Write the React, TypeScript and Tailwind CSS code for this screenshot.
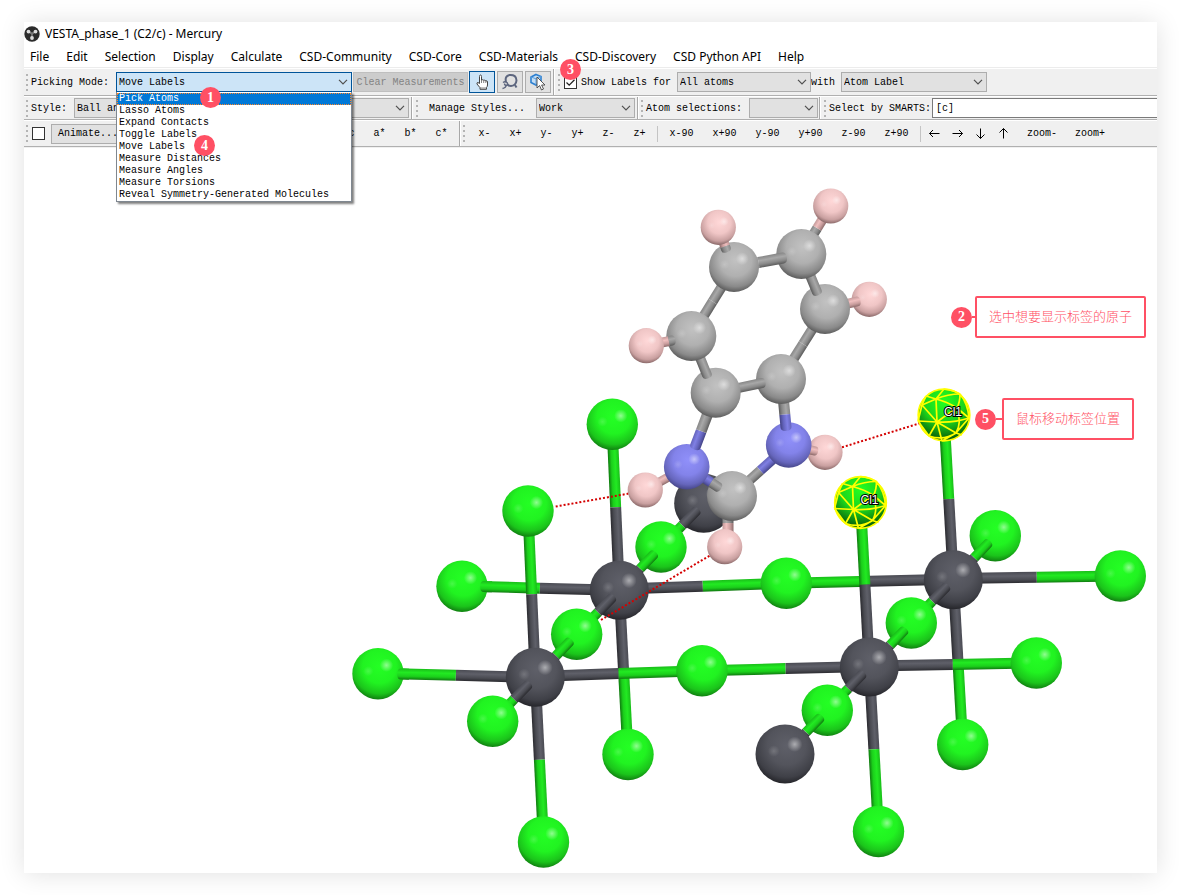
import React from "react";

type Kind = "cl" | "m" | "c" | "n" | "h";

const menus = [
  "File", "Edit", "Selection", "Display", "Calculate", "CSD-Community",
  "CSD-Core", "CSD-Materials", "CSD-Discovery", "CSD Python API", "Help",
];

const modes = [
  "Pick Atoms", "Lasso Atoms", "Expand Contacts", "Toggle Labels", "Move Labels",
  "Measure Distances", "Measure Angles", "Measure Torsions",
  "Reveal Symmetry-Generated Molecules",
];

const radius: Record<Kind, number> = { cl: 25.7, m: 29.5, c: 25, n: 22.8, h: 17.6 };

const ballStops: Record<Kind, string[]> = {
  cl: ["#24ff24", "#21f321", "#1bc41b", "#0d6a0d"],
  m: ["#5f6069", "#53545c", "#3f4047", "#1d1d21"],
  c: ["#c2c2c2", "#b0b0b0", "#8a8a8a", "#4c4c4c"],
  n: ["#9090fa", "#8383ea", "#6666bc", "#3c3c78"],
  h: ["#ffd8d8", "#f0c6c6", "#c9a0a0", "#755656"],
};

const rodStops: Record<Kind, string[]> = {
  cl: ["#19bd19", "#22ea22", "#1bcf1b", "#107a10"],
  m: ["#4a4b53", "#5f6069", "#4a4b52", "#2b2b30"],
  c: ["#868686", "#a8a8a8", "#8a8a8a", "#5c5c5c"],
  n: ["#6464bb", "#8080e4", "#6464bd", "#444486"],
  h: ["#c39999", "#f0bfbf", "#c99d9d", "#8d6b6b"],
};

const kinds: Kind[] = ["cl", "m", "c", "n", "h"];

function Ball({ k, x, y }: { k: Kind; x: number; y: number }) {
  const r = radius[k];
  return (
    <g>
      <circle cx={x} cy={y} r={r} fill={`url(#ball-${k})`} />
      <circle cx={x + r * 0.33} cy={y - r * 0.33} r={r * 0.26} fill="url(#shine)" />
      <circle cx={x - r * 0.38} cy={y - r * 0.1} r={r * 0.2} fill="url(#shine)" opacity="0.35" />
    </g>
  );
}

interface RodProps {
  from: [number, number];
  to: [number, number];
  a: Kind;
  b?: Kind;
  split?: number;
  w?: number;
  cap?: "from" | "to";
}

function Rod({ from, to, a, b = a, split = 0.5, w = 11, cap }: RodProps) {
  let [p, q, ka, kb, s, c] = [from, to, a, b, split, cap];
  if (to[0] < from[0]) {
    [p, q, ka, kb, s] = [to, from, b, a, 1 - split];
    c = cap === "from" ? "to" : cap === "to" ? "from" : undefined;
  }
  const dx = q[0] - p[0];
  const dy = q[1] - p[1];
  const len = Math.hypot(dx, dy);
  const m = len * s;
  const deg = (Math.atan2(dy, dx) * 180) / Math.PI;
  const h = w / 2;
  const start = c === "from" ? `M${m} ${-h}H0Q${-h * 0.7} ${-h} ${-h * 0.7} 0Q${-h * 0.7} ${h} 0 ${h}H${m}Z` : `M0 ${-h}H${m}V${h}H0Z`;
  const end = c === "to" ? `M${m} ${-h}H${len}Q${len + h * 0.7} ${-h} ${len + h * 0.7} 0Q${len + h * 0.7} ${h} ${len} ${h}H${m}Z` : `M${m} ${-h}H${len}V${h}H${m}Z`;
  return (
    <g transform={`translate(${p[0]} ${p[1]}) rotate(${deg})`}>
      <path d={start} fill={`url(#rod-${ka})`} />
      <path d={end} fill={`url(#rod-${kb})`} />
    </g>
  );
}

/* A bond whose far end pokes out of the atom behind it. */
function Deep({ far, near, a, b }: { far: [number, number]; near: [number, number]; a: Kind; b: Kind }) {
  const s: [number, number] = [far[0] + (near[0] - far[0]) * 0.18, far[1] + (near[1] - far[1]) * 0.18];
  return <Rod from={s} to={near} a={a} b={b} split={0.39} cap="from" w={10} />;
}

function Picked({ x, y }: { x: number; y: number }) {
  return (
    <g transform={`translate(${x} ${y})`}>
      <circle r="26" fill="url(#ball-picked)" />
      <g fill="none" stroke="#ffff00" strokeWidth="1.7">
        <circle r="25.800" />
        <path d="M-8-16-18-19M-8-16 0-26M-8-16Q4-21 16-21M-8-16-22-10M-8-16-7 7M-8-16Q4-13 13-7" />
        <path d="M-7 7-22-10M-7 7-26 6M-7 7-15 21M-7 7-2 26M-7 7 12 18M-7 7Q2 0 13-7M-7 7Q10 8 25 3" />
        <path d="M16-21Q16-13 13-7M16-21Q24-11 25 3M13-7 25 3M13-7Q18 8 12 18M12 18 25 3M12 18-2 26M12 18 18 20M-15 21Q0 26 12 18M-22-10-26 6M-26 6-15 21M-18-19Q-20-15-22-10M0-26Q9-25 16-21" />
      </g>
      <text x="0" y="1" fontSize="12" fontFamily="Liberation Sans, sans-serif" fill="#fff" stroke="#000" strokeWidth="2" paintOrder="stroke">Cl1</text>
    </g>
  );
}

function Scene() {
  return (
    <svg viewBox="24 149 1133 724" className="block w-full" role="img" aria-label="Crystal structure">
      <defs>
        {kinds.map((k) => (
          <React.Fragment key={k}>
            <radialGradient id={`ball-${k}`} cx="0.53" cy="0.36" r="0.68">
              <stop offset="0" stopColor={ballStops[k][0]} />
              <stop offset="0.48" stopColor={ballStops[k][1]} />
              <stop offset="0.78" stopColor={ballStops[k][2]} />
              <stop offset="1" stopColor={ballStops[k][3]} />
            </radialGradient>
            <linearGradient id={`rod-${k}`} x1="0" y1="0" x2="0" y2="1">
              <stop offset="0" stopColor={rodStops[k][0]} />
              <stop offset="0.35" stopColor={rodStops[k][1]} />
              <stop offset="0.7" stopColor={rodStops[k][2]} />
              <stop offset="1" stopColor={rodStops[k][3]} />
            </linearGradient>
          </React.Fragment>
        ))}
        <radialGradient id="ball-picked" cx="0.5" cy="0.25" r="0.78">
          <stop offset="0" stopColor="#22ff22" />
          <stop offset="0.5" stopColor="#1cd41c" />
          <stop offset="1" stopColor="#064a06" />
        </radialGradient>
        <radialGradient id="shine">
          <stop offset="0" stopColor="#fff" stopOpacity="0.5" />
          <stop offset="1" stopColor="#fff" stopOpacity="0" />
        </radialGradient>
      </defs>

      <Ball k="m" x={703.7} y={503.3} />
      <Deep far={[703.7, 503.3]} near={[661, 547]} a="m" b="cl" />
      <Ball k="cl" x={661} y={547} />
      <Deep far={[661, 547]} near={[619.3, 590.3]} a="cl" b="m" />
      <Ball k="cl" x={995.3} y={535.7} />
      <Deep far={[995.3, 535.7]} near={[953.3, 579.7]} a="cl" b="m" />

      <Rod from={[612, 424]} to={[619.3, 590.3]} a="cl" b="m" />
      <Rod from={[619.3, 590.3]} to={[628, 754.5]} a="m" b="cl" split={0.48} />
      <Rod from={[944, 415]} to={[953.3, 579.7]} a="cl" b="m" split={0.51} />
      <Rod from={[953.3, 579.7]} to={[962.7, 744.5]} a="m" b="cl" />
      <Rod from={[480, 586.5]} to={[619.3, 590.3]} a="cl" b="m" split={0.43} />
      <Rod from={[619.3, 589]} to={[786.3, 583.3]} a="m" b="cl" />
      <Rod from={[786.3, 583.3]} to={[953.3, 579.2]} a="cl" b="m" />
      <Rod from={[953.3, 578.6]} to={[1120.3, 576]} a="m" b="cl" />
      <Ball k="cl" x={612.3} y={424.3} />
      <Ball k="cl" x={628} y={754.5} />
      <Ball k="cl" x={962.7} y={744.5} />
      <Ball k="cl" x={462} y={586.3} />
      <Rod from={[484, 586.6]} to={[492, 586.8]} a="cl" cap="from" />
      <Ball k="cl" x={786.3} y={583.3} />
      <Ball k="cl" x={1120.3} y={576} />
      <Ball k="m" x={619.3} y={590.3} />
      <Ball k="m" x={953.3} y={579.7} />
      <Deep far={[619.3, 590.3]} near={[576.7, 634.3]} a="m" b="cl" />
      <Deep far={[953.3, 579.7]} near={[911.3, 623]} a="m" b="cl" />
      <Ball k="cl" x={576.7} y={634.3} />
      <Ball k="cl" x={911.3} y={623} />
      <Deep far={[576.7, 634.3]} near={[535.3, 677.3]} a="cl" b="m" />
      <Deep far={[911.3, 623]} near={[869.3, 667]} a="cl" b="m" />

      <Rod from={[528, 511]} to={[535.3, 677.3]} a="cl" b="m" />
      <Rod from={[535.3, 677.3]} to={[543.5, 842]} a="m" b="cl" />
      <Rod from={[860.5, 502]} to={[869.3, 667]} a="cl" b="m" />
      <Rod from={[869.3, 667]} to={[878.5, 831.5]} a="m" b="cl" />
      <Rod from={[396, 673.7]} to={[535.3, 677.3]} a="cl" b="m" split={0.43} />
      <Rod from={[535.3, 676.5]} to={[702, 670.7]} a="m" b="cl" />
      <Rod from={[702, 670.7]} to={[869.3, 666.5]} a="cl" b="m" />
      <Rod from={[869.3, 666]} to={[1036.3, 663]} a="m" b="cl" />
      <Ball k="cl" x={528} y={511} />
      <Ball k="cl" x={543.5} y={842} />
      <Ball k="cl" x={878.5} y={831.5} />
      <Ball k="cl" x={378} y={673.7} />
      <Rod from={[401, 674]} to={[409, 674.2]} a="cl" cap="from" />
      <Ball k="cl" x={702} y={670.7} />
      <Ball k="cl" x={1036.3} y={663} />
      <Ball k="m" x={535.3} y={677.3} />
      <Ball k="m" x={869.3} y={667} />
      <Deep far={[535.3, 677.3]} near={[492.7, 721.3]} a="m" b="cl" />
      <Deep far={[869.3, 667]} near={[827.3, 710.3]} a="m" b="cl" />
      <Ball k="cl" x={492.7} y={721.3} />
      <Ball k="cl" x={827.3} y={710.3} />
      <Deep far={[827.3, 710.3]} near={[785, 754]} a="cl" b="m" />
      <Ball k="m" x={785} y={754} />

      <Picked x={944} y={415} />
      <Picked x={860.5} y={502.5} />

      <g stroke="#d40000" strokeWidth="2" strokeDasharray="2 2">
        <path d="M555.7 506.5 632 493M601 620 710 555.500M842 447.300 919 423.500" />
      </g>

      <Ball k="h" x={825} y={452.3} />
      <Rod from={[788.7, 445]} to={[815, 451]} a="h" w={9} cap="to" />
      <Ball k="h" x={869.3} y={299.3} />
      <Rod from={[825, 309]} to={[857, 301.5]} a="h" w={10} cap="to" />
      <Rod from={[825, 309]} to={[781, 379]} a="c" w={10} />
      <Ball k="c" x={825} y={309} />
      <Rod from={[788.7, 445]} to={[732, 496]} a="n" b="c" w={10} />
      <Ball k="n" x={788.7} y={445} />
      <Rod from={[782.5, 390]} to={[786, 427]} a="c" b="n" split={0.66} w={11} cap="to" />
      <Ball k="c" x={781} y={379} />
      <Rod from={[715.7, 392.7]} to={[762, 383]} a="c" w={10} cap="to" />
      <Rod from={[801.3, 254]} to={[817, 292]} a="c" w={10} cap="to" />
      <Rod from={[801.3, 254]} to={[830.7, 206]} a="c" b="h" split={0.54} w={10} />
      <Ball k="c" x={801.3} y={254} />
      <Ball k="h" x={830.7} y={206} />
      <Rod from={[734, 267]} to={[783, 258]} a="c" w={11} cap="to" />
      <Rod from={[734, 267]} to={[691.3, 336]} a="c" w={10} />
      <Ball k="c" x={734} y={267} />
      <Rod from={[718.3, 227.3]} to={[726, 249]} a="h" b="c" split={0.88} w={10} cap="to" />
      <Ball k="h" x={718.3} y={227.3} />
      <Rod from={[728, 546]} to={[728, 505]} a="h" b="c" split={0.56} w={11} />
      <Ball k="c" x={732} y={496} />
      <Rod from={[686.7, 466.7]} to={[718, 487]} a="n" b="c" split={0.78} w={10} cap="to" />
      <Rod from={[645.3, 490]} to={[686.7, 466.7]} a="h" b="n" split={0.57} w={9} />
      <Ball k="h" x={645.3} y={490} />
      <Ball k="n" x={686.7} y={466.7} />
      <Rod from={[715.7, 392.7]} to={[695.5, 446]} a="c" b="n" split={0.72} w={11} cap="to" />
      <Ball k="c" x={715.7} y={392.7} />
      <Rod from={[691.3, 336]} to={[707, 375]} a="c" w={10} cap="to" />
      <Ball k="c" x={691.3} y={336} />
      <Rod from={[646.3, 345.7]} to={[672, 340.5]} a="h" b="c" split={0.88} w={10} cap="to" />
      <Ball k="h" x={646.3} y={345.7} />
      <Ball k="h" x={724.7} y={546.7} />
    </svg>
  );
}

function Grip() {
  return (
    <span aria-hidden="true" className="flex shrink-0 flex-col gap-[3px]">
      <i className="size-[2px] bg-[#b4b4b4]" />
      <i className="size-[2px] bg-[#b4b4b4]" />
      <i className="size-[2px] bg-[#b4b4b4]" />
      <i className="size-[2px] bg-[#b4b4b4]" />
    </span>
  );
}

function Split() {
  return <span aria-hidden="true" className="h-full w-[2px] shrink-0 border-l border-[#a8a8a8] bg-white" />;
}

function Drop({ id, value, width, open, label }: { id: string; value: string; width: string; open?: boolean; label?: string }) {
  return (
    <span className={`relative flex h-5 shrink-0 items-center ${width}`}>
      <select
        id={id}
        aria-label={label}
        className={`h-5 w-full appearance-none border pl-[2px] pr-4 pt-px leading-4 outline-none ${open ? "border-[#005499] bg-[#cce4f7]" : "border-[#adadad] bg-[#e1e1e1]"}`}
      >
        <option>{value}</option>
      </select>
      <svg viewBox="0 0 10 6" className="pointer-events-none absolute right-1 h-[6px] w-[10px]" fill="none" stroke="#505050" strokeWidth="1.2">
        <path d="M1 .8 5 4.800 9 .8" />
      </svg>
    </span>
  );
}

function Badge({ n }: { n: number }) {
  return (
    <span className="flex size-[21px] shrink-0 items-center justify-center rounded-full bg-[#ff5064] font-['Liberation_Serif',serif] text-[14px] font-bold leading-none text-white">
      {n}
    </span>
  );
}

function Callout({ n, text, gap }: { n: number; text: string; gap: string }) {
  return (
    <div className="flex items-center">
      <Badge n={n} />
      <span className={`h-[2px] bg-[#ff5064] ${gap}`} />
      <p className="rounded-[2px] border-2 border-[#ff5064] px-3 pb-[10px] pt-2 font-['Noto_Sans_CJK_SC',sans-serif] text-[13px] font-light leading-5 text-[#ff5064]">
        {text}
      </p>
    </div>
  );
}

function Tick({ id, checked, label }: { id: string; checked?: boolean; label?: string }) {
  return (
    <span className="relative flex size-[13px] shrink-0">
      <input id={id} type="checkbox" defaultChecked={checked} aria-label={label} className="peer size-[13px] appearance-none border border-[#333] bg-white" />
      <svg viewBox="0 0 13 13" className="pointer-events-none absolute inset-0 hidden peer-checked:block" fill="none" stroke="#222" strokeWidth="1.3">
        <path d="M2.500 6.500 5.200 9.200 10.500 3.800" />
      </svg>
    </span>
  );
}

function Steps({ items, width }: { items: string[]; width: string }) {
  return (
    <>
      {items.map((t) => (
        <button key={t} type="button" className={`h-5 shrink-0 text-center ${width}`}>{t}</button>
      ))}
    </>
  );
}

const arrows = [
  { name: "Left", d: "M11.500 6.500H1.500M5 3 1.500 6.500 5 10" },
  { name: "Right", d: "M1.500 6.500H11.500M8 3 11.500 6.500 8 10" },
  { name: "Down", d: "M6.500 1.500V11.500M2.500 7.500 6.500 11.500 10.500 7.500" },
  { name: "Up", d: "M6.500 11.500V1.500M2.500 5.500 6.500 1.500 10.500 5.500" },
];

export default function App() {
  return (
    <div className="min-h-screen bg-white pb-[22px] pl-6 pr-[22px] pt-[22px]">
      <main className="bg-white text-black shadow-[0_1px_24px_rgba(0,0,0,0.12)]">
        <header className="font-['Noto_Sans',sans-serif] text-[12px]">
          <h1 className="flex h-6 items-center gap-[5px] font-normal">
            <svg viewBox="0 0 16 16" className="size-4" aria-hidden="true">
              <circle cx="8" cy="8" r="7.700" fill="#2b2b2b" />
              <path d="M4.500 6 8 7.500 11.500 6M8 7.500V12" stroke="#999" strokeWidth="1.200" fill="none" />
              <circle cx="4.500" cy="5.600" r="1.900" fill="#ddd" />
              <circle cx="11.500" cy="5.600" r="1.900" fill="#ddd" />
              <circle cx="8" cy="12" r="1.900" fill="#ddd" />
              <circle cx="8" cy="7.600" r="1.300" fill="#777" />
            </svg>
            VESTA_phase_1 (C2/c) - Mercury
          </h1>
          <nav className="flex h-[22px] items-center gap-[17px] border-b border-[#ececec] pl-[6px]">
            {menus.map((m) => (
              <button key={m} type="button" className="shrink-0 whitespace-nowrap">{m}</button>
            ))}
          </nav>
        </header>

        <div className="mt-px whitespace-pre bg-[#f0f0f0] pb-px font-['Liberation_Mono',monospace] text-[10px] leading-4">
          <div className="relative flex h-[27px] items-center border-b border-[#b0b0b0] pl-[2px]">
            <Grip />
            <label htmlFor="mode" className="ml-[3px] w-[85px] shrink-0 pt-px">Picking Mode:</label>
            <div className="relative shrink-0">
              <Drop id="mode" value="Move Labels" width="w-[236px]" open />
              <ul role="listbox" aria-label="Picking Mode" className="absolute left-0 top-5 z-10 w-[236px] border border-[#7f8790] border-t-0 bg-white pt-px leading-3 shadow-[2px_2px_2px_rgba(0,0,0,0.5)]">
                {modes.map((m, i) => (
                  <li
                    key={m}
                    role="option"
                    aria-selected={i === 0}
                    className={`flex h-3 items-center pl-[2px] ${i === 0 ? "bg-[#0078d7] text-white outline-1 -outline-offset-1 outline-dotted outline-[#ff8728]" : ""}`}
                  >
                    {m}
                  </li>
                ))}
              </ul>
              <span className="absolute left-[84px] top-[15px] z-20"><Badge n={1} /></span>
              <span className="absolute left-[78px] top-[63px] z-20"><Badge n={4} /></span>
            </div>
            <button type="button" disabled className="ml-px h-5 w-[115px] shrink-0 border border-[#bfbfbf] bg-[#cccccc] pt-px text-center text-[#838383]">Clear Measurements</button>
            <div className="ml-[1px] flex shrink-0 gap-[2px]">
              <button type="button" aria-label="Pick" className="flex h-[22px] w-[26px] items-center justify-center border border-[#005499] bg-[#cce4f7]">
                <svg viewBox="0 0 16 16" className="size-4">
                  <path d="M5.500 9.500V2.500Q5.500 1 6.500 1T7.500 2.500V6Q9 5.300 9.800 6.300 11 5.700 11.800 6.800 13.500 6.500 13.500 8V11Q13.500 12.500 12.500 13.500V15.300H6V13.700L3 10Q2.500 8.500 4 8.500Z" fill="#fff" stroke="#444" />
                  <path d="M7.500 6V9M9.700 6.500V9M11.800 7V9M6 14H12.500" stroke="#666" fill="none" strokeWidth=".8" />
                </svg>
              </button>
              <button type="button" aria-label="Lasso" className="flex h-[22px] w-[26px] items-center justify-center border border-[#adadad] bg-[#e1e1e1]">
                <svg viewBox="0 0 18 18" className="size-[18px]" fill="none" stroke="#5d667f">
                  <path d="M5 9Q3.500 3 8.500 2 15.500 1.500 15.500 7.500 15 12.500 10 13 8 13 6.500 11.500" strokeWidth="2" />
                  <path d="M2 9.500Q4 8 6 9.500 7.500 11.500 5.500 12.500 3.500 12.500 3.500 10.500M5.500 11.500Q5 15 1.500 15.500" strokeWidth="1.400" />
                  <path d="M14 12 15.500 14.500" strokeWidth="2" />
                </svg>
              </button>
              <button type="button" aria-label="Select" className="flex h-[22px] w-[26px] items-center justify-center border border-[#adadad] bg-[#e1e1e1]">
                <svg viewBox="0 0 18 18" className="size-[18px]">
                  <path d="M7 1.500 12 3.500V9.500L7 12 2 9.500V4Z" fill="#c4def5" stroke="#2b7fd0" strokeWidth="1.600" />
                  <path d="M2 4 7 5.800 12 3.500M7 5.800V12" fill="none" stroke="#5b9fe0" />
                  <path d="M8 4V15L10.600 12.500 12.500 17 14.500 16 12.600 12H16Z" fill="#fff" stroke="#444" strokeWidth=".9" />
                </svg>
              </button>
            </div>
            <span className="ml-[2px] flex h-full shrink-0"><Split /></span>
            <span className="ml-[3px] flex shrink-0 items-center"><Grip /></span>
            <span className="ml-1 flex shrink-0 items-center">
              <Tick id="labels" checked />
              <label htmlFor="labels" className="ml-1 w-24 pt-px">Show Labels for</label>
            </span>
            <Drop id="scope" label="Atoms to label" value="All atoms" width="w-[134px]" />
            <label htmlFor="content" className="w-[30px] shrink-0 pt-px">with</label>
            <Drop id="content" value="Atom Label" width="w-[146px]" />
            <span className="absolute left-[536px] -top-[10px] z-20"><Badge n={3} /></span>
          </div>

          <div className="flex h-6 items-center overflow-hidden border-b border-t border-b-[#b0b0b0] border-t-white pl-[2px]">
            <Grip />
            <label htmlFor="style" className="ml-[3px] w-[43px] shrink-0 pt-px">Style:</label>
            <Drop id="style" value="Ball and Stick" width="w-[335px]" />
            <span className="ml-[2px] flex h-full shrink-0"><Split /></span>
            <span className="ml-[3px] flex shrink-0"><Grip /></span>
            <button type="button" className="w-[118px] shrink-0 pt-px text-center">Manage Styles...</button>
            <Drop id="preset" label="Style preset" value="Work" width="w-[99px]" />
            <span className="ml-[2px] flex h-full shrink-0"><Split /></span>
            <span className="ml-[2px] flex shrink-0"><Grip /></span>
            <label htmlFor="selections" className="ml-[3px] w-[103px] shrink-0 pt-px">Atom selections:</label>
            <Drop id="selections" value="" width="w-[69px]" />
            <span className="ml-px flex h-full shrink-0"><Split /></span>
            <span className="ml-[3px] flex shrink-0"><Grip /></span>
            <label htmlFor="smarts" className="ml-[3px] w-[103px] shrink-0 pt-px">Select by SMARTS:</label>
            <input id="smarts" type="text" defaultValue="[c]" className="h-5 min-w-0 flex-1 border border-r-0 border-[#7a7a7a] bg-white px-[3px] pt-px outline-none" />
          </div>

          <div className="flex h-[27px] items-center overflow-hidden border-b border-t border-b-[#b0b0b0] border-t-white">
            <div className="flex h-full w-[435px] shrink-0 items-center pl-[2px]">
              <Grip />
              <span className="ml-1"><Tick id="animate" label="Animate" /></span>
              <button type="button" className="ml-[6px] h-5 w-[74px] border border-[#adadad] bg-[#e1e1e1] text-center">Animate...</button>
              <span className="ml-auto flex pr-[2px]">
                <Steps items={["c"]} width="w-[25px]" />
                <Steps items={["a*", "b*", "c*"]} width="w-[31px]" />
              </span>
            </div>
            <Split />
            <span className="ml-[2px] mr-1 flex shrink-0"><Grip /></span>
            <Steps items={["x-", "x+", "y-", "y+", "z-", "z+"]} width="w-[31px]" />
            <span className="mx-[2px] h-4 w-px shrink-0 bg-[#c4c4c4]" />
            <Steps items={["x-90", "x+90", "y-90", "y+90", "z-90", "z+90"]} width="w-[43px]" />
            <span className="mx-[2px] h-4 w-px shrink-0 bg-[#c4c4c4]" />
            {arrows.map((a) => (
              <button key={a.name} type="button" aria-label={a.name} className="flex h-5 w-[23px] shrink-0 items-center justify-center">
                <svg viewBox="0 0 13 13" className="size-[13px]" fill="none" stroke="#000"><path d={a.d} /></svg>
              </button>
            ))}
            <span className="ml-[3px] flex shrink-0"><Steps items={["zoom-", "zoom+"]} width="w-12" /></span>
          </div>
        </div>

        <section className="relative mt-px overflow-hidden bg-white">
          <Scene />
          <div className="absolute right-[11px] top-[147px]"><Callout n={2} text="选中想要显示标签的原子" gap="w-[3px]" /></div>
          <div className="absolute right-[23px] top-[249px]"><Callout n={5} text="鼠标移动标签位置" gap="w-[6px]" /></div>
        </section>
      </main>
    </div>
  );
}
